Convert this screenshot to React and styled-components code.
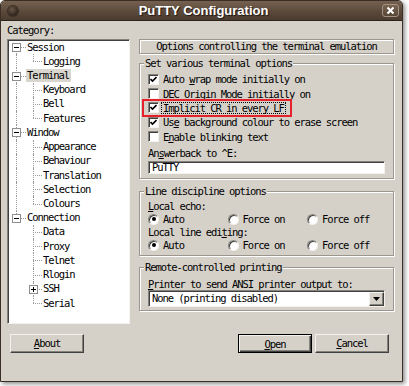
import React from "react";
import styled, { createGlobalStyle, css } from "styled-components";

const MONO = `"DejaVu Sans Mono", "Liberation Mono", monospace`;
const FACE = "#d5d1c9";

const GlobalStyle = createGlobalStyle`
  html, body {
    margin: 0;
    background: #fff;
  }
  body {
    width: 409px;
    height: 386px;
    overflow: hidden;
  }
`;

const Window = styled.div`
  width: 403px;
  height: 382px;
  box-sizing: border-box;
  display: flex;
  flex-direction: column;
  border: 1px solid #3a2e25;
  border-radius: 5px 5px 0 0;
  overflow: hidden;
  background: ${FACE};
  box-shadow: 2px 2px 4px rgba(0, 0, 0, 0.45);
  font-family: ${MONO};
  font-size: 10.5px;
  letter-spacing: -1.07px;
  color: #000;
`;

const TitleBar = styled.div`
  height: 20px;
  flex: none;
  box-sizing: border-box;
  display: grid;
  grid-template-columns: 1fr auto 1fr;
  align-items: center;
  padding: 0 3px 0 7px;
  background: linear-gradient(#766150, #5b4a3b 55%, #4b3c30);
  border-bottom: 1px solid #2e241d;
`;

const Knob = styled.span`
  width: 10px;
  height: 10px;
  border-radius: 50%;
  background: radial-gradient(circle at 40% 35%, #6a5848, #2f241c 70%);
  box-shadow: 0 0 0 1px #3a2d23;
`;

const Title = styled.div`
  font-family: "Liberation Sans", Arial, sans-serif;
  font-weight: bold;
  font-size: 13px;
  letter-spacing: 0;
  color: #fff;
  text-shadow: 1px 1px 1px #1e1712;
`;

const CloseButton = styled.span`
  justify-self: end;
  width: 17px;
  height: 13px;
  box-sizing: border-box;
  border: 1px solid #a39283;
  border-radius: 3px;
  background: linear-gradient(#7a6451, #574636);
  display: flex;
  align-items: center;
  justify-content: center;
`;

const Body = styled.div`
  flex: 1;
  display: flex;
  flex-direction: column;
  padding: 2px 8px 0 6px;
`;

const Caption = styled.div`
  line-height: 14px;
`;

const Main = styled.div`
  display: grid;
  grid-template-columns: 123px 255px;
  column-gap: 9px;
  align-items: start;
  margin-top: 2px;
`;

const TreePanel = styled.div`
  height: 285px;
  box-sizing: border-box;
  background: #fff;
  border: 1px solid;
  border-color: #85827c #f4f2ee #f4f2ee #85827c;
  box-shadow: inset 1px 1px 0 #404040;
  overflow: hidden;
`;

const TreeRow = styled.div`
  display: flex;
  height: 14.22px;
  align-items: center;
`;

const Rail = styled.span`
  position: relative;
  flex: none;
  align-self: stretch;
  width: ${(p) => p.$w}px;

  &::before {
    content: "";
    position: absolute;
    left: ${(p) => p.$c}px;
    top: ${(p) => (p.$kind === "first" ? "50%" : "0")};
    bottom: ${(p) => (p.$kind === "last" ? "50%" : "0")};
    border-left: 1px dotted #9a9a9a;
    display: ${(p) => (p.$kind === "none" ? "none" : "block")};
  }

  &::after {
    content: "";
    position: absolute;
    left: ${(p) => p.$c}px;
    right: 0;
    top: 50%;
    border-top: 1px dotted #9a9a9a;
    display: ${(p) => (p.$kind === "pass" || p.$kind === "none" ? "none" : "block")};
  }
`;

const Expander = styled.span`
  position: absolute;
  z-index: 1;
  left: ${(p) => p.$c - 4}px;
  top: calc(50% - 4px);
  width: 9px;
  height: 9px;
  box-sizing: border-box;
  border: 1px solid #8e8e8e;
  background: #fff;

  &::before {
    content: "";
    position: absolute;
    left: 1px;
    top: 3px;
    width: 5px;
    height: 1px;
    background: #000;
  }

  &::after {
    content: "";
    position: absolute;
    left: 3px;
    top: 1px;
    width: 1px;
    height: 5px;
    background: #000;
    display: ${(p) => (p.$plus ? "block" : "none")};
  }
`;

const NodeLabel = styled.span`
  padding: 0 2px 0 1px;
  line-height: 13px;
  white-space: nowrap;
  background: ${(p) => (p.$selected ? "#d9d6cf" : "transparent")};
`;

const Panel = styled.div`
  display: flex;
  flex-direction: column;
`;

const Header = styled.div`
  height: 15px;
  box-sizing: border-box;
  border: 1px solid #9b978f;
  box-shadow: inset 1px 1px 0 #fff, 1px 1px 0 #fff;
  text-align: center;
  line-height: 13px;
  white-space: nowrap;
`;

const Group = styled.div`
  margin-top: ${(p) => p.$gap}px;
  border: 1px solid #9b978f;
  box-shadow: inset 1px 1px 0 #fff, 1px 1px 0 #fff;
  padding: 0 8px ${(p) => p.$pb}px 8px;
  display: flex;
  flex-direction: column;
`;

const Legend = styled.div`
  align-self: flex-start;
  margin: -7px 0 0 -4px;
  padding: 0 1px;
  background: ${FACE};
  line-height: 12px;
  white-space: nowrap;
`;

const CheckList = styled.div`
  display: flex;
  flex-direction: column;
  margin-top: 3px;
`;

const CheckRow = styled.div`
  position: relative;
  align-self: flex-start;
  display: flex;
  align-items: center;
  gap: 4px;
  height: 14.4px;
  white-space: nowrap;

  ${(p) =>
    p.$marked &&
    css`
      &::after {
        content: "";
        position: absolute;
        left: -6px;
        right: -6px;
        top: -2px;
        bottom: -2px;
        border: 2px solid #e5222b;
      }
    `}
`;

const Box = styled.span`
  flex: none;
  width: 11px;
  height: 11px;
  box-sizing: border-box;
  background: #fff;
  border: 1px solid;
  border-color: #85827c #f4f2ee #f4f2ee #85827c;
  box-shadow: inset 1px 1px 0 #404040;
  display: flex;
  align-items: center;
  justify-content: center;
`;

const Focus = styled.span`
  margin-left: -2px;
  padding: 0 1px;
  border: 1px dotted #000;
  line-height: 10px;
`;

const FieldLabel = styled.div`
  margin-top: ${(p) => p.$mt || 0}px;
  line-height: ${(p) => p.$lh || 13}px;
  white-space: nowrap;
`;

const TextField = styled.div`
  margin-top: 1px;
  height: 13px;
  box-sizing: border-box;
  background: #fff;
  border: 1px solid;
  border-color: #85827c #f4f2ee #f4f2ee #85827c;
  box-shadow: inset 1px 1px 0 #404040;
  padding-left: 3px;
  line-height: 11px;
`;

const RadioRow = styled.div`
  display: grid;
  grid-template-columns: repeat(3, 79.5px);
  height: 13px;
  align-items: center;
`;

const RadioItem = styled.span`
  display: flex;
  align-items: center;
  gap: 4px;
  white-space: nowrap;
`;

const Radio = styled.span`
  flex: none;
  width: 11px;
  height: 11px;
  box-sizing: border-box;
  border-radius: 50%;
  background: #fff;
  border: 1px solid;
  border-color: #85827c #f4f2ee #f4f2ee #85827c;
  box-shadow: inset 1px 1px 0 #404040;
  display: flex;
  align-items: center;
  justify-content: center;

  &::after {
    content: "";
    width: 4px;
    height: 4px;
    border-radius: 50%;
    background: #000;
    display: ${(p) => (p.$on ? "block" : "none")};
  }
`;

const Select = styled.div`
  height: 17px;
  box-sizing: border-box;
  display: flex;
  align-items: stretch;
  background: #fff;
  border: 1px solid;
  border-color: #85827c #f4f2ee #f4f2ee #85827c;
  box-shadow: inset 1px 1px 0 #404040;
`;

const SelectText = styled.span`
  flex: 1;
  padding-left: 3px;
  line-height: 15px;
  white-space: nowrap;
`;

const DropButton = styled.span`
  width: 15px;
  box-sizing: border-box;
  margin: 1px 0 0 0;
  background: ${FACE};
  border: 1px solid;
  border-color: #f4f2ee #404040 #404040 #f4f2ee;
  box-shadow: inset -1px -1px 0 #85827c;
  display: flex;
  align-items: center;
  justify-content: center;
`;

const Footer = styled.div`
  display: flex;
  align-items: center;
  gap: 3px;
  margin-top: 9px;
  padding: 0 5px 0 3px;
`;

const Spacer = styled.span`
  flex: 1;
`;

const Button = styled.button`
  width: 74px;
  height: 19px;
  box-sizing: border-box;
  padding: 0;
  font: inherit;
  letter-spacing: inherit;
  color: #000;
  background: ${FACE};
  border: 1px solid;
  border-color: #f4f2ee #404040 #404040 #f4f2ee;
  box-shadow: inset -1px -1px 0 #85827c;
  margin-top: ${(p) => (p.$default ? "1px" : "0")};

  ${(p) =>
    p.$default &&
    css`
      border-color: #000;
      box-shadow: inset 1px 1px 0 #f4f2ee, inset -1px -1px 0 #404040,
        inset -2px -2px 0 #85827c;
    `}
`;

const Key = styled.u`
  text-decoration-thickness: 1px;
  text-underline-offset: 1px;
`;

const tree = [
  { label: "Session", children: [{ label: "Logging" }] },
  {
    label: "Terminal",
    selected: true,
    children: [{ label: "Keyboard" }, { label: "Bell" }, { label: "Features" }],
  },
  {
    label: "Window",
    children: [
      { label: "Appearance" },
      { label: "Behaviour" },
      { label: "Translation" },
      { label: "Selection" },
      { label: "Colours" },
    ],
  },
  {
    label: "Connection",
    children: [
      { label: "Data" },
      { label: "Proxy" },
      { label: "Telnet" },
      { label: "Rlogin" },
      { label: "SSH", plus: true },
      { label: "Serial" },
    ],
  },
];

const Tree = () => {
  const rows = [];
  tree.forEach((node, i) => {
    const last = i === tree.length - 1;
    const kind = i === 0 ? "first" : last ? "last" : "tee";
    rows.push(
      <TreeRow key={node.label}>
        <Rail $w={18} $c={8} $kind={kind}>
          <Expander $c={8} />
        </Rail>
        <NodeLabel $selected={node.selected}>{node.label}</NodeLabel>
      </TreeRow>
    );
    node.children.forEach((child, j) => {
      const lastChild = j === node.children.length - 1;
      rows.push(
        <TreeRow key={child.label}>
          <Rail $w={18} $c={8} $kind={last ? "none" : "pass"} />
          <Rail $w={16} $c={7} $kind={lastChild ? "last" : "tee"}>
            {child.plus && <Expander $c={7} $plus />}
          </Rail>
          <NodeLabel>{child.label}</NodeLabel>
        </TreeRow>
      );
    });
  });
  return <TreePanel>{rows}</TreePanel>;
};

const Tick = () => (
  <svg width="7" height="7" viewBox="0 0 7 7">
    <polyline points="0.5,3 2.5,5 6.5,1" fill="none" stroke="#000" strokeWidth="1.6" />
  </svg>
);

const Check = ({ on, marked, children }) => (
  <CheckRow $marked={marked}>
    <Box>{on && <Tick />}</Box>
    {children}
  </CheckRow>
);

const RadioSet = ({ value }) => (
  <RadioRow>
    {["Auto", "Force on", "Force off"].map((opt) => (
      <RadioItem key={opt}>
        <Radio $on={opt === value} />
        {opt}
      </RadioItem>
    ))}
  </RadioRow>
);

const App = () => {
  return (
    <>
      <GlobalStyle />
      <Window>
        <TitleBar>
          <Knob />
          <Title>PuTTY Configuration</Title>
          <CloseButton>
            <svg width="9" height="9" viewBox="0 0 9 9">
              <path d="M1.5 1.5 L7.5 7.5 M7.5 1.5 L1.5 7.5" stroke="#fff" strokeWidth="2" />
            </svg>
          </CloseButton>
        </TitleBar>
        <Body>
          <Caption>Category:</Caption>
          <Main>
            <Tree />
            <Panel>
              <Header>Options controlling the terminal emulation</Header>

              <Group $gap={9} $pb={4}>
                <Legend>Set various terminal options</Legend>
                <CheckList>
                  <Check on>
                    <span>
                      Auto <Key>w</Key>rap mode initially on
                    </span>
                  </Check>
                  <Check>
                    <span>
                      <Key>D</Key>EC Origin Mode initially on
                    </span>
                  </Check>
                  <Check on marked>
                    <Focus>Implicit CR in every LF</Focus>
                  </Check>
                  <Check on>
                    <span>
                      Us<Key>e</Key> background colour to erase screen
                    </span>
                  </Check>
                  <Check>
                    <span>
                      E<Key>n</Key>able blinking text
                    </span>
                  </Check>
                </CheckList>
                <FieldLabel $mt={2} $lh={14}>
                  An<Key>s</Key>werback to ^E:
                </FieldLabel>
                <TextField>PuTTY</TextField>
              </Group>

              <Group $gap={12} $pb={3}>
                <Legend>Line discipline options</Legend>
                <FieldLabel $mt={3}>
                  <Key>L</Key>ocal echo:
                </FieldLabel>
                <RadioSet value="Auto" />
                <FieldLabel>
                  Local line edi<Key>t</Key>ing:
                </FieldLabel>
                <RadioSet value="Auto" />
              </Group>

              <Group $gap={11} $pb={3}>
                <Legend>Remote-controlled printing</Legend>
                <FieldLabel $mt={5} $lh={12}>
                  <Key>P</Key>rinter to send ANSI printer output to:
                </FieldLabel>
                <Select>
                  <SelectText>None (printing disabled)</SelectText>
                  <DropButton>
                    <svg width="7" height="4" viewBox="0 0 7 4">
                      <path d="M0 0 H7 L3.5 4 Z" fill="#000" />
                    </svg>
                  </DropButton>
                </Select>
              </Group>
            </Panel>
          </Main>
          <Footer>
            <Button>
              <Key>A</Key>bout
            </Button>
            <Spacer />
            <Button $default>
              <Key>O</Key>pen
            </Button>
            <Button>
              <Key>C</Key>ancel
            </Button>
          </Footer>
        </Body>
      </Window>
    </>
  );
};

export default App;
